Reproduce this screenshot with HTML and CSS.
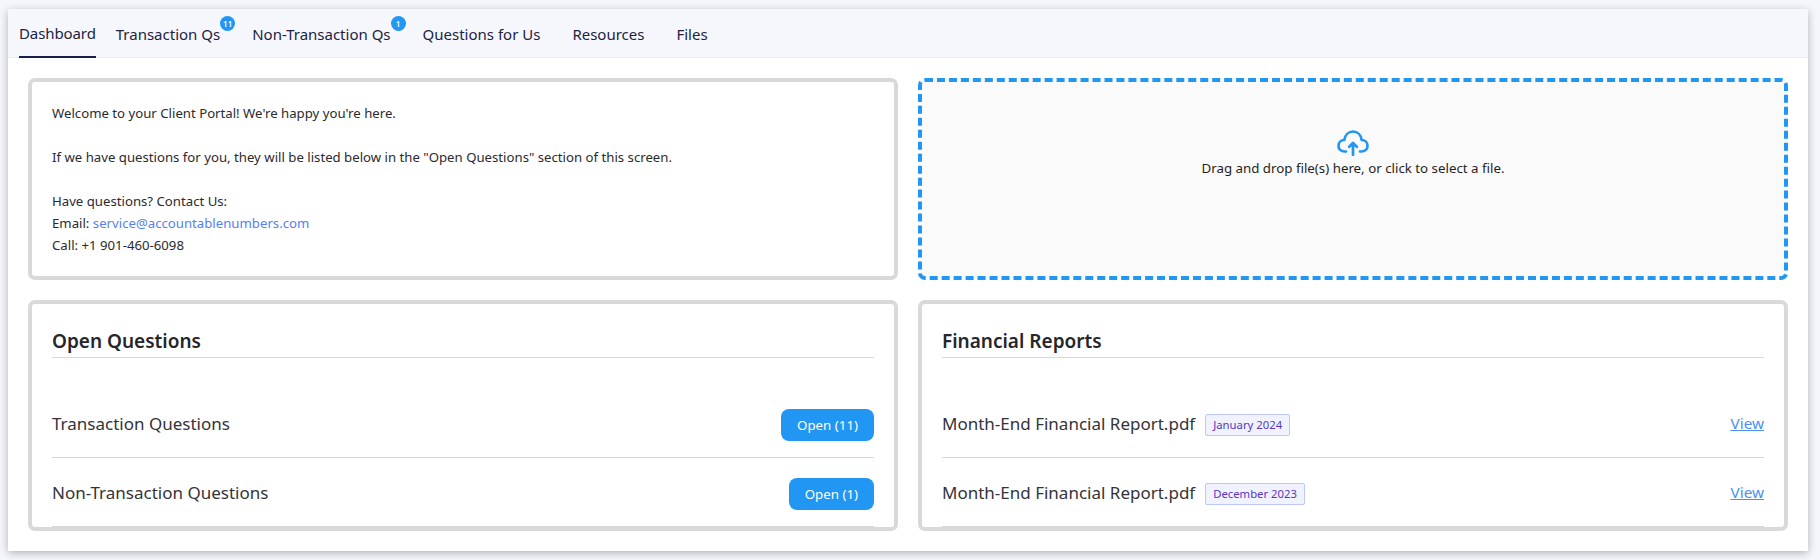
FILE: index.html
```html
<!DOCTYPE html>
<html lang="en">
<head>
<meta charset="utf-8">
<title>Client Portal</title>
<link rel="stylesheet" href="styles.css">
</head>
<body>
<main class="shell">
  <nav class="tabs">
    <a class="tab tab-active">Dashboard</a>
    <a class="tab tab-badged tab-t">Transaction Qs<span class="badge">11</span></a>
    <a class="tab tab-badged tab-n">Non-Transaction Qs<span class="badge">1</span></a>
    <a class="tab tab-q">Questions for Us</a>
    <a class="tab tab-r">Resources</a>
    <a class="tab tab-f">Files</a>
  </nav>
  <div class="grid">
    <section class="card welcome">
      Welcome to your Client Portal! We're happy you're here.<br><br>
      If we have questions for you, they will be listed below in the "Open Questions" section of this screen.<br><br>
      Have questions? Contact Us:<br>
      Email: <a class="mail">service@accountablenumbers.com</a><br>
      Call: +1 901-460-6098
    </section>
    <section class="drop">
      <svg class="cloud" viewBox="0 0 32 26" fill="none" stroke="#2196f3" stroke-width="2.7" stroke-linecap="round" stroke-linejoin="round">
        <path d="M9 21.5H7.500C4 21.500 1.500 19 1.500 15.800C1.500 12.500 4 10 7.300 10C8 5 11.500 1.500 16 1.500C20.500 1.500 24 5 24.700 10C28 10 30.500 12.500 30.500 15.800C30.500 19 28 21.500 24.500 21.500H23"/>
        <path d="M16 25V13M12.200 16.800L16 13L19.800 16.800"/>
      </svg>
      <p class="drop-text">Drag and drop file(s) here, or click to select a file.</p>
    </section>
    <section class="card panel">
      <h2 class="panel-title">Open Questions</h2>
      <div class="row">
        <span class="row-name">Transaction Questions</span>
        <button class="btn">Open (11)</button>
      </div>
      <div class="row">
        <span class="row-name">Non-Transaction Questions</span>
        <button class="btn">Open (1)</button>
      </div>
    </section>
    <section class="card panel">
      <h2 class="panel-title">Financial Reports</h2>
      <div class="row">
        <span class="row-name">Month-End Financial Report.pdf<span class="tag">January 2024</span></span>
        <a class="view">View</a>
      </div>
      <div class="row">
        <span class="row-name">Month-End Financial Report.pdf<span class="tag">December 2023</span></span>
        <a class="view">View</a>
      </div>
    </section>
  </div>
</main>
</body>
</html>
```
FILE: styles.css
```css
* { box-sizing: border-box; }
html, body { height: 100%; }
body {
  margin: 0;
  padding: 9px 12px 0 8px;
  background: #f5f6fb;
  overflow: hidden;
  font-family: "Noto Sans", "Open Sans", sans-serif;
  color: #2a2a2e;
}
.shell {
  background: #fff;
  height: 542px;
  border-radius: 3px 3px 0 0;
  box-shadow: 0 2px 8px rgba(0, 0, 0, 0.28);
}
.tabs {
  display: flex;
  height: 49px;
  padding-left: 11px;
  background: #f6f7fc;
  border-bottom: 1px solid #e9ebf1;
  font-size: 15px;
  letter-spacing: 0;
  color: #1c2340;
}
.tab {
  position: relative;
  display: flex;
  align-items: center;
  margin-right: 32px;
  height: 49px;
}
.tab-active { margin-right: 20px; border-bottom: 2px solid #16204a; letter-spacing: -0.1px; }
.tab-badged .badge { position: absolute; left: 100%; top: 7px; }
.badge {
  width: 15px;
  height: 15px;
  border-radius: 50%;
  background: #2196f3;
  color: #fff;
  font-size: 8px;
  font-weight: 600;
  line-height: 15px;
  text-align: center;
  letter-spacing: 0;
}
.grid {
  display: grid;
  grid-template-columns: 870px 870px;
  grid-template-rows: 202px 231px;
  gap: 20px;
  padding: 20px 20px 0;
}
.card {
  background: #fff;
  border: 4px solid #d9d9d9;
  border-radius: 7px;
  padding: 20px;
}
.welcome { font-size: 13.2px; line-height: 22px; color: #2a2a2e; }
.mail { color: #5580f5; }
.drop {
  display: flex;
  flex-direction: column;
  align-items: center;
  background: #fafafa;
  border: 4px dashed #2196f3;
  border-radius: 7px;
  padding-top: 48px;
}
.cloud { width: 32px; height: 26px; display: block; }
.drop-text { margin: 1px 0 0; font-size: 13.3px; line-height: 22px; color: #1f1f1f; }
.panel { padding-bottom: 0; }
.panel-title {
  margin: 0 0 31px;
  height: 34px;
  border-bottom: 1px solid #d9d9d9;
  font-size: 19px;
  line-height: 35px;
  font-weight: 600;
  color: #26262a;
}
.row {
  display: flex;
  align-items: center;
  justify-content: space-between;
  height: 69px;
  padding: 20px 0 16px;
  border-bottom: 1px solid #d9d9d9;
}
.row-name { font-size: 17px; color: #333338; display: flex; align-items: center; margin-bottom: 4px; }
.btn {
  height: 32px;
  padding: 0 16px;
  border: 0;
  border-radius: 8px;
  background: #2196f3;
  color: #fff;
  font: 13.3px "Noto Sans", "Open Sans", sans-serif;
}
.tag {
  margin-left: 10px;
  padding: 0 7px;
  height: 22px;
  border: 1px solid #bcc8fb;
  border-radius: 2px;
  background: #f0f3ff;
  color: #5a35c4;
  font-size: 11.3px;
  line-height: 20px;
  position: relative;
  top: 2px;
}
.view { font-size: 15.3px; color: #4a90f5; text-decoration: underline; margin-bottom: 4px; }
```
